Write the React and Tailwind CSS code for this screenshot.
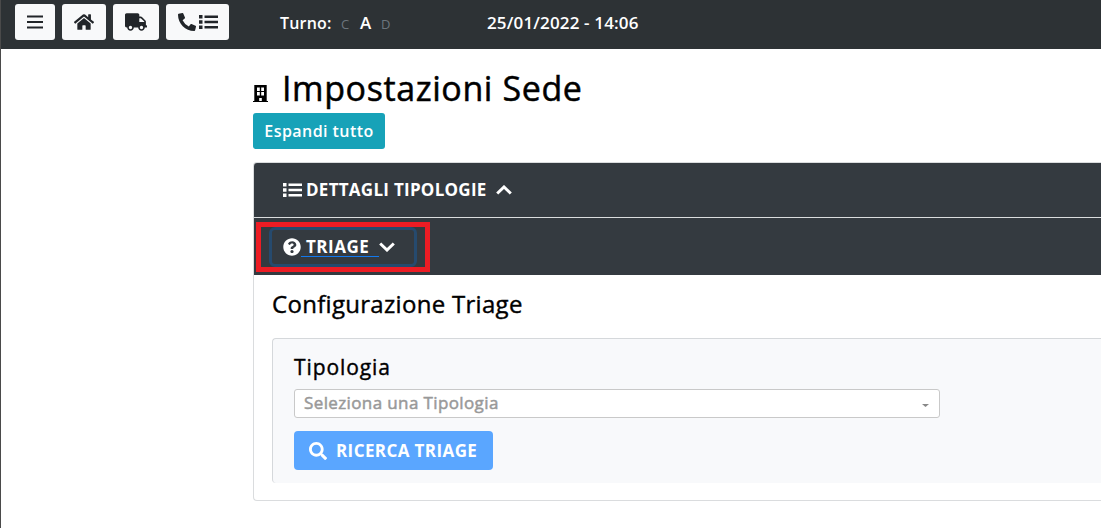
import React from "react";
import { FaHome, FaTruck, FaQuestionCircle, FaSearch, FaPhoneAlt } from "react-icons/fa";

function ListIcon({ className = "" }) {
  return (
    <svg className={`h-[14px] w-[19px] ${className}`} viewBox="0 0 19 14" fill="currentColor">
      <path d="M0 0H3.5V3.4H0ZM0 5.3H3.5V8.7H0ZM0 10.6H3.5V14H0Z" />
      <path d="M5.5 .5H19V3H5.5ZM5.5 5.8H19V8.3H5.5ZM5.5 11H19V13.5H5.5Z" />
    </svg>
  );
}

function Chevron({ className = "" }) {
  return (
    <svg className={`h-[10px] w-4 ${className}`} viewBox="0 0 16 10" fill="none" stroke="currentColor" strokeWidth="3">
      <path d="M1.2 8.5L8 2L14.8 8.5" />
    </svg>
  );
}

function BuildingIcon() {
  return (
    <svg className="mt-[9px] h-[17px] w-[15px]" viewBox="0 0 15 17" fill="currentColor">
      <path
        fillRule="evenodd"
        d="M1.3 0H13.7V16H15V17H0V16H1.3ZM4 2.5V6H6.8V2.5ZM8.2 2.5V6H11V2.5ZM4 7V10.5H6.8V7ZM8.2 7V10.5H11V7ZM6.2 13V16H8.8V13Z"
      />
    </svg>
  );
}

function NavButton({ className, children }) {
  return (
    <button className={`flex h-9 items-center justify-center rounded-[3px] bg-[#f8f9fa] text-[#212529] ${className}`}>
      {children}
    </button>
  );
}

function Navbar() {
  return (
    <header className="flex h-[49px] items-start bg-[#2d3235] pt-1 pl-[14px] text-white">
      <div className="flex gap-[7px]">
        <NavButton className="w-10">
          <svg className="h-[14px] w-4" viewBox="0 0 16 14" stroke="currentColor" strokeWidth="2">
            <path d="M0 1.5H16M0 7H16M0 12.5H16" />
          </svg>
        </NavButton>
        <NavButton className="w-11"><FaHome className="h-[18px] w-5" /></NavButton>
        <NavButton className="w-[46px]"><FaTruck className="h-[18px] w-[22px]" /></NavButton>
        <NavButton className="w-[63px] gap-[3px]">
          <FaPhoneAlt className="size-[18px]" />
          <ListIcon />
        </NavButton>
      </div>
      <div className="ml-[51px] flex h-[38px] items-center text-base font-semibold">
        <span className="w-[61px] tracking-[0.2px] whitespace-nowrap">Turno:</span>
        <span className="w-[19px] pt-[3px] text-[13px] font-normal text-[#6c757d]">C</span>
        <span className="w-[21px] text-[17px]">A</span>
        <span className="w-[106px] pt-[3px] text-[13px] font-normal text-[#6c757d]">D</span>
        <span className="text-[17px] tracking-[0.15px] whitespace-nowrap">25/01/2022 - 14:06</span>
      </div>
    </header>
  );
}

function TriageCard() {
  return (
    <section className="h-[339px] rounded-l-[4px] border border-r-0 border-[#dadcde]">
      <div className="flex h-[54px] items-center rounded-tl-[3px] bg-[#343a40] pl-[29px] text-[17px] font-bold text-white">
        <ListIcon />
        <span className="ml-1 w-[190px] tracking-[0.27px] whitespace-nowrap">DETTAGLI TIPOLOGIE</span>
        <Chevron />
      </div>
      <div className="flex h-[58px] border-t border-[#dadcde] bg-[#343a40] pt-1 pl-[2px]">
        <div className="h-[50px] w-[174px] border-[5px] border-[#ed1c24] pl-2">
          <button className="flex h-10 w-[148px] items-center rounded-[6px] border-[3px] border-[#264a6e] pl-[11px] text-[17px] font-bold text-white">
            <FaQuestionCircle className="size-[18px]" />
            <span className="flex h-[19px] w-[78px] items-center border-b border-[#1279ef] pl-[5px] tracking-[0.5px] whitespace-nowrap">TRIAGE</span>
            <Chevron className="rotate-180" />
          </button>
        </div>
      </div>
      <div className="pt-[14px] pl-[18px] text-black">
        <h2 className="h-8 text-[24px] leading-[30px] tracking-[0.3px] [-webkit-text-stroke:0.4px_currentColor]">Configurazione Triage</h2>
        <div className="mt-[17px] h-[145px] rounded-l-[4px] border-t border-l border-[#d5d8db] bg-[#f8f9fb] pt-[13px] pl-[21px]">
          <h3 className="h-8 text-[21px] leading-[31px] tracking-[0.9px] [-webkit-text-stroke:0.4px_currentColor]">Tipologia</h3>
          <div className="mt-[5px] flex h-[29px] w-[646px] items-center justify-between rounded-[3px] border border-[#c9c9c9] bg-white pr-[10px] pl-[9px] text-[17px] text-[#999]">
            <span className="pb-[2px] tracking-[0.38px] [-webkit-text-stroke:0.5px_currentColor]">Seleziona una Tipologia</span>
            <svg className="mt-1 h-[3px] w-[7px]" viewBox="0 0 7 3"><path d="M0 0H7L3.5 3Z" fill="#888" /></svg>
          </div>
          <button className="mt-[13px] flex h-[39px] w-[199px] items-center rounded-[4px] bg-[#5aa6ff] pl-[15px] text-[17px] font-bold text-white">
            <FaSearch className="size-[18px]" />
            <span className="ml-[9px] tracking-[0.4px] whitespace-nowrap">RICERCA TRIAGE</span>
          </button>
        </div>
      </div>
    </section>
  );
}

export default function App() {
  return (
    <div className="h-[528px] w-[1101px] overflow-hidden border-l border-[#4a4a4a] bg-white font-['Open_Sans','Noto_Sans',sans-serif]">
      <Navbar />
      <main className="pt-[15px] pl-[252px]">
        <div className="flex h-[49px] items-center text-black">
          <BuildingIcon />
          <h1 className="ml-[14px] text-[34px] leading-[49px] tracking-[0.6px] whitespace-nowrap [-webkit-text-stroke:0.5px_currentColor]">Impostazioni Sede</h1>
        </div>
        <button className="mb-[13px] block h-9 w-[132px] rounded-[3px] bg-[#17a2b8] text-base font-semibold tracking-[0.45px] text-white">Espandi tutto</button>
        <TriageCard />
      </main>
    </div>
  );
}
